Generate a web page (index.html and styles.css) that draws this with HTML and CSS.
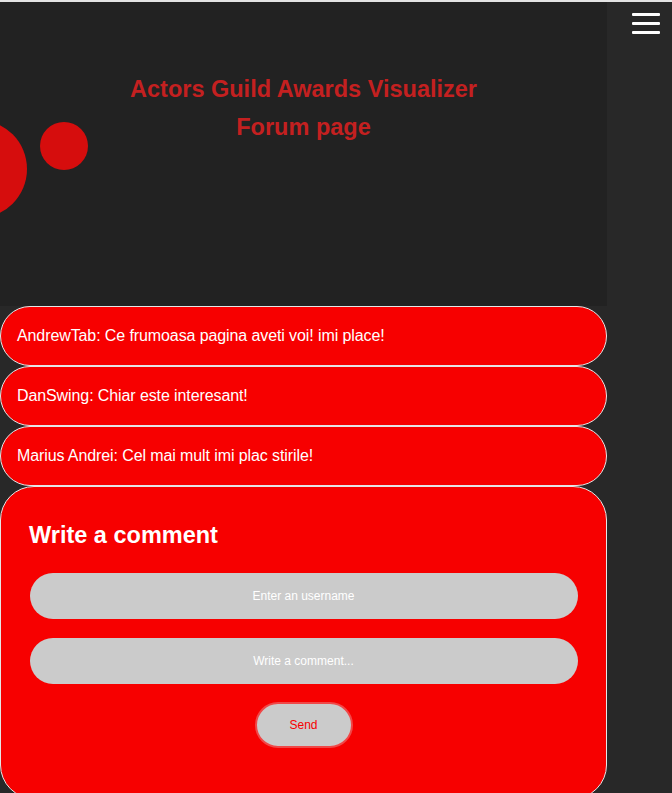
FILE: index.html
```html
<!DOCTYPE html>
<html>
<head>
<meta charset="utf-8">
<link rel="stylesheet" href="styles.css">
</head>
<body>
<div class="page">
  <div class="main">
    <header class="hero">
      <span class="dot dot-big"></span>
      <span class="dot dot-small"></span>
      <h1 class="title">Actors Guild Awards Visualizer</h1>
      <h2 class="subtitle">Forum page</h2>
    </header>
    <div class="comment">AndrewTab: Ce frumoasa pagina aveti voi! imi place!</div>
    <div class="comment">DanSwing: Chiar este interesant!</div>
    <div class="comment">Marius Andrei: Cel mai mult imi plac stirile!</div>
    <form class="form">
      <h3 class="form-title">Write a comment</h3>
      <input class="field" type="text" placeholder="Enter an username">
      <input class="field" type="text" placeholder="Write a comment...">
      <button class="send" type="button">Send</button>
    </form>
  </div>
  <aside class="side">
    <div class="burger"><span></span><span></span><span></span></div>
  </aside>
</div>
</body>
</html>
```
FILE: styles.css
```css
html, body {
  margin: 0;
  padding: 0;
}
body {
  background: #282828;
  font-family: "Liberation Sans", Arial, sans-serif;
  border-top: 2px solid #e4e4e4;
  overflow: hidden;
}
.page {
  display: flex;
  align-items: flex-start;
}
.main {
  width: 607px;
  flex: none;
}
.side {
  flex: 1;
  display: flex;
  justify-content: center;
  padding-top: 11px;
  padding-left: 13px;
}
.burger {
  display: flex;
  flex-direction: column;
  gap: 6px;
  width: 28px;
}
.burger span {
  display: block;
  height: 3px;
  background: #ffffff;
  border-radius: 1px;
}
.hero {
  position: relative;
  height: 304px;
  background: #222222;
  overflow: hidden;
  display: flex;
  flex-direction: column;
  align-items: center;
  padding-top: 72px;
  box-sizing: border-box;
}
.dot {
  position: absolute;
  border-radius: 50%;
  background: #d60d0d;
}
.dot-big {
  width: 98px;
  height: 98px;
  left: -71px;
  top: 118px;
}
.dot-small {
  width: 48px;
  height: 48px;
  left: 40px;
  top: 120px;
}
.title, .subtitle {
  margin: 0;
  color: #c42020;
  font-size: 23.5px;
  font-weight: bold;
  line-height: 30px;
}
.subtitle {
  margin-top: 8px;
}
.comment {
  height: 60px;
  box-sizing: border-box;
  border: 1px solid #e6e6e6;
  border-radius: 30px;
  background: #f70000;
  color: #ffffff;
  font-size: 16px;
  letter-spacing: -0.1px;
  display: flex;
  align-items: center;
  padding-left: 16px;
}
.form {
  margin: 0;
  background: #f70000;
  border: 1px solid #e6e6e6;
  border-radius: 34px;
  padding: 34px 28px 50px;
  display: flex;
  flex-direction: column;
  align-items: center;
}
.form-title {
  align-self: stretch;
  margin: 0 0 24px;
  color: #ffffff;
  font-size: 23.5px;
  font-weight: bold;
  line-height: 28px;
}
.field {
  width: 548px;
  height: 46px;
  box-sizing: border-box;
  border: none;
  border-radius: 23px;
  background: #cbcbcb;
  font-family: "Liberation Sans", Arial, sans-serif;
  font-size: 12px;
  text-align: center;
  color: #ffffff;
  margin: 0 0 19px;
  outline: none;
}
.field::placeholder {
  color: #ffffff;
  opacity: 1;
}
.send {
  margin-top: -1px;
  width: 98px;
  height: 46px;
  border: 2px solid #f04848;
  border-radius: 23px;
  background: #cbcbcb;
  color: #f70000;
  font-family: "Liberation Sans", Arial, sans-serif;
  font-size: 12px;
}
```
